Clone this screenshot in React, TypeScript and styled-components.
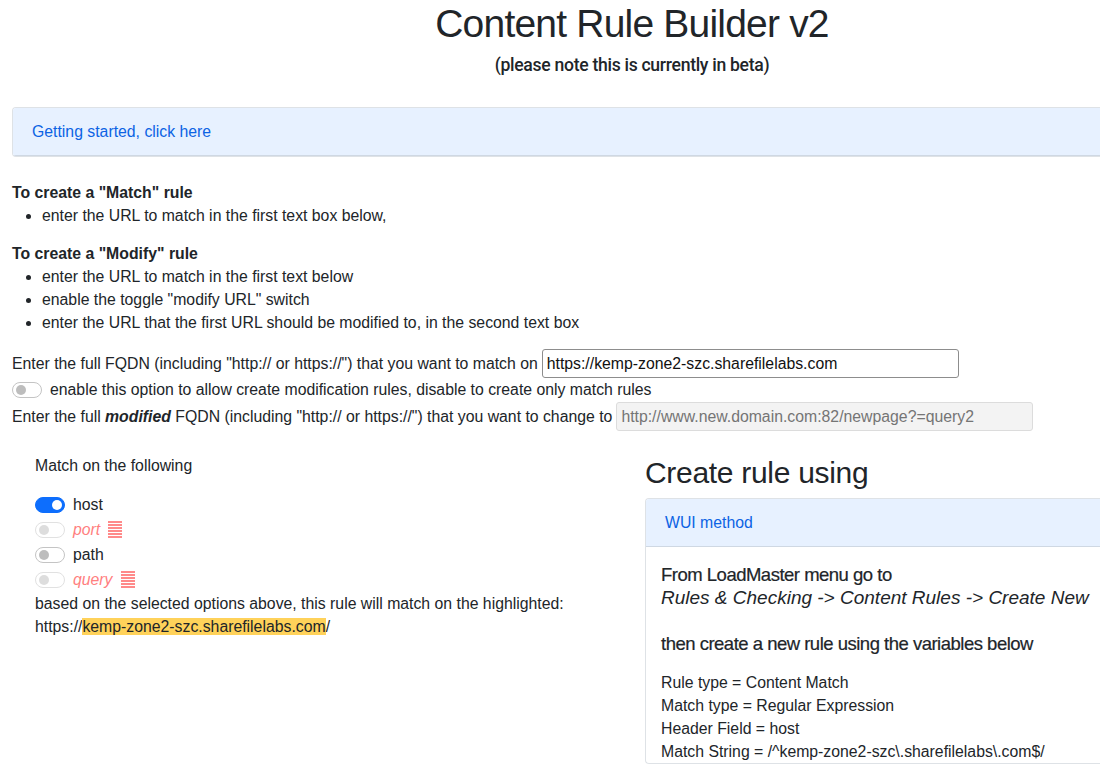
import React from "react";
import styled, { createGlobalStyle } from "styled-components";

const GlobalStyle = createGlobalStyle`
  html, body {
    margin: 0;
    padding: 0;
    background: #ffffff;
    overflow: hidden;
  }
  body {
    font-family: "Liberation Sans", Arial, sans-serif;
    font-size: 15.8px;
    color: #212529;
  }
`;

const Page = styled.div`
  width: 1240px;
  margin-left: 12px;
`;

const Header = styled.header`
  text-align: center;
  padding-top: 2px;
`;

const Title = styled.h1`
  margin: 0;
  font-family: "Liberation Sans", Arial, sans-serif;
  font-weight: 400;
  font-size: 39px;
  line-height: 44px;
  letter-spacing: -0.8px;
`;

const Subtitle = styled.h5`
  margin: 7px 0 0;
  font-family: Roboto, "Liberation Sans", sans-serif;
  font-size: 17.6px;
  line-height: 24px;
  font-weight: 500;
  letter-spacing: -0.3px;
`;

const Accordion = styled.div<{ $top?: number }>`
  margin-top: ${(p) => p.$top ?? 0}px;
  border: 1px solid #dee2e6;
  border-right: none;
  border-radius: 4px 0 0 4px;
  overflow: hidden;
`;

const AccordionHeader = styled.div`
  height: 48px;
  display: flex;
  align-items: center;
  padding: 0 19px;
  background: #e7f1ff;
  color: #0c63e4;
  font-size: 15.8px;
  box-shadow: inset 0 -1px 0 #cfd8e3;
`;

const Intro = styled.section`
  margin-top: 24px;
`;

const RuleHeading = styled.div`
  font-weight: 700;
  line-height: 23px;
`;

const Bullets = styled.ul`
  margin: 0 0 15px;
  padding-left: 30px;
  li {
    line-height: 23px;
  }
`;

const FieldRow = styled.div`
  display: flex;
  align-items: center;
  gap: 4px;
  height: 29px;
`;

const SwitchRow = styled.div`
  display: flex;
  align-items: center;
  gap: 8px;
  height: 24px;
`;

const TextInput = styled.input<{ $width: number }>`
  box-sizing: border-box;
  width: ${(p) => p.$width}px;
  height: 29px;
  padding: 0 4px;
  font-family: "Liberation Sans", Arial, sans-serif;
  font-size: 15.8px;
  color: #111;
  border: 1px solid #8d8d8d;
  border-radius: 3px;
  background: #fff;
  &:disabled {
    background: #f3f3f3;
    color: #8a8a8a;
    border-color: #dcdcdc;
  }
`;

const Columns = styled.div`
  display: grid;
  grid-template-columns: 620px 620px;
  margin-top: 23px;
`;

const LeftCol = styled.div`
  padding-left: 23px;
`;

const RightCol = styled.div`
  padding-left: 13px;
`;

const Caption = styled.div`
  line-height: 23px;
  margin-bottom: 15px;
`;

const OptionRow = styled.div<{ $muted?: boolean }>`
  display: flex;
  align-items: center;
  gap: 8px;
  height: 25px;
  color: ${(p) => (p.$muted ? "#ff7f7f" : "#212529")};
  font-style: ${(p) => (p.$muted ? "italic" : "normal")};
`;

const Track = styled.span<{ $on?: boolean; $disabled?: boolean }>`
  box-sizing: border-box;
  position: relative;
  display: inline-block;
  width: 30px;
  height: 16px;
  border-radius: 8px;
  border: 1px solid ${(p) => (p.$on ? "#0d6efd" : "#c4c4c4")};
  background: ${(p) => (p.$on ? "#0d6efd" : "#fff")};
  opacity: ${(p) => (p.$disabled ? 0.5 : 1)};
  flex-shrink: 0;
  &::after {
    content: "";
    position: absolute;
    top: 2px;
    left: ${(p) => (p.$on ? "16px" : "2.5px")};
    width: 10px;
    height: 10px;
    border-radius: 50%;
    background: ${(p) => (p.$on ? "#fff" : "#bdbdbd")};
  }
`;

const PlainLine = styled.div`
  line-height: 23px;
`;

const Highlight = styled.mark`
  background: #ffd25a;
  color: #212529;
`;

const SectionTitle = styled.h2`
  margin: 1px 0 7px;
  font-family: "Liberation Sans", Arial, sans-serif;
  font-weight: 400;
  font-size: 30px;
  line-height: 36px;
  letter-spacing: -0.3px;
`;

const PanelBody = styled.div`
  padding: 16px 15px 0;
`;

const LeadLine = styled.div<{ $italic?: boolean }>`
  font-size: ${(p) => (p.$italic ? 19 : 18.5)}px;
  line-height: 23px;
  font-style: ${(p) => (p.$italic ? "italic" : "normal")};
  letter-spacing: ${(p) => (p.$italic ? "0px" : "-0.5px")};
  -webkit-text-stroke: ${(p) => (p.$italic ? "0" : "0.2px")};
`;

const Spacer = styled.div<{ $h: number }>`
  height: ${(p) => p.$h}px;
`;

const VarLine = styled.div`
  line-height: 23px;
`;

const StripeIcon = () => (
  <svg width="14" height="18" viewBox="0 0 14 18" aria-hidden>
    {[0, 1, 2, 3, 4, 5].map((i) => (
      <rect key={i} x="0" y={i * 3} width="14" height="2" fill="#ff8a8a" />
    ))}
  </svg>
);

type Option = { label: string; on?: boolean; disabled?: boolean };

const options: Option[] = [
  { label: "host", on: true },
  { label: "port", disabled: true },
  { label: "path" },
  { label: "query", disabled: true },
];

export default function App() {
  return (
    <Page>
      <GlobalStyle />
      <Header>
        <Title>Content Rule Builder v2</Title>
        <Subtitle>(please note this is currently in beta)</Subtitle>
      </Header>

      <Accordion $top={30}>
        <AccordionHeader>Getting started, click here</AccordionHeader>
      </Accordion>

      <Intro>
        <RuleHeading>To create a "Match" rule</RuleHeading>
        <Bullets>
          <li>enter the URL to match in the first text box below,</li>
        </Bullets>
        <RuleHeading>To create a "Modify" rule</RuleHeading>
        <Bullets>
          <li>enter the URL to match in the first text below</li>
          <li>enable the toggle "modify URL" switch</li>
          <li>enter the URL that the first URL should be modified to, in the second text box</li>
        </Bullets>
      </Intro>

      <FieldRow>
        <span>Enter the full FQDN (including "http:// or https://") that you want to match on</span>
        <TextInput $width={417} defaultValue="https://kemp-zone2-szc.sharefilelabs.com" />
      </FieldRow>
      <SwitchRow>
        <Track />
        <span>enable this option to allow create modification rules, disable to create only match rules</span>
      </SwitchRow>
      <FieldRow>
        <span>
          Enter the full <b><i>modified</i></b> FQDN (including "http:// or https://") that you want to change to
        </span>
        <TextInput $width={417} disabled placeholder="http://www.new.domain.com:82/newpage?=query2" />
      </FieldRow>

      <Columns>
        <LeftCol>
          <Caption>Match on the following</Caption>
          {options.map((o) => (
            <OptionRow key={o.label} $muted={o.disabled}>
              <Track $on={o.on} $disabled={o.disabled} />
              <span>{o.label}</span>
              {o.disabled && <StripeIcon />}
            </OptionRow>
          ))}
          <PlainLine>based on the selected options above, this rule will match on the highlighted:</PlainLine>
          <PlainLine>
            https://<Highlight>kemp-zone2-szc.sharefilelabs.com</Highlight>/
          </PlainLine>
        </LeftCol>

        <RightCol>
          <SectionTitle>Create rule using</SectionTitle>
          <Accordion>
            <AccordionHeader>WUI method</AccordionHeader>
            <PanelBody>
              <LeadLine>From LoadMaster menu go to</LeadLine>
              <LeadLine $italic>Rules &amp; Checking -&gt; Content Rules -&gt; Create New</LeadLine>
              <Spacer $h={23} />
              <LeadLine>then create a new rule using the variables below</LeadLine>
              <Spacer $h={16} />
              <VarLine>Rule type = Content Match</VarLine>
              <VarLine>Match type = Regular Expression</VarLine>
              <VarLine>Header Field = host</VarLine>
              <VarLine>Match String = /^kemp-zone2-szc\.sharefilelabs\.com$/</VarLine>
            </PanelBody>
          </Accordion>
        </RightCol>
      </Columns>
    </Page>
  );
}
